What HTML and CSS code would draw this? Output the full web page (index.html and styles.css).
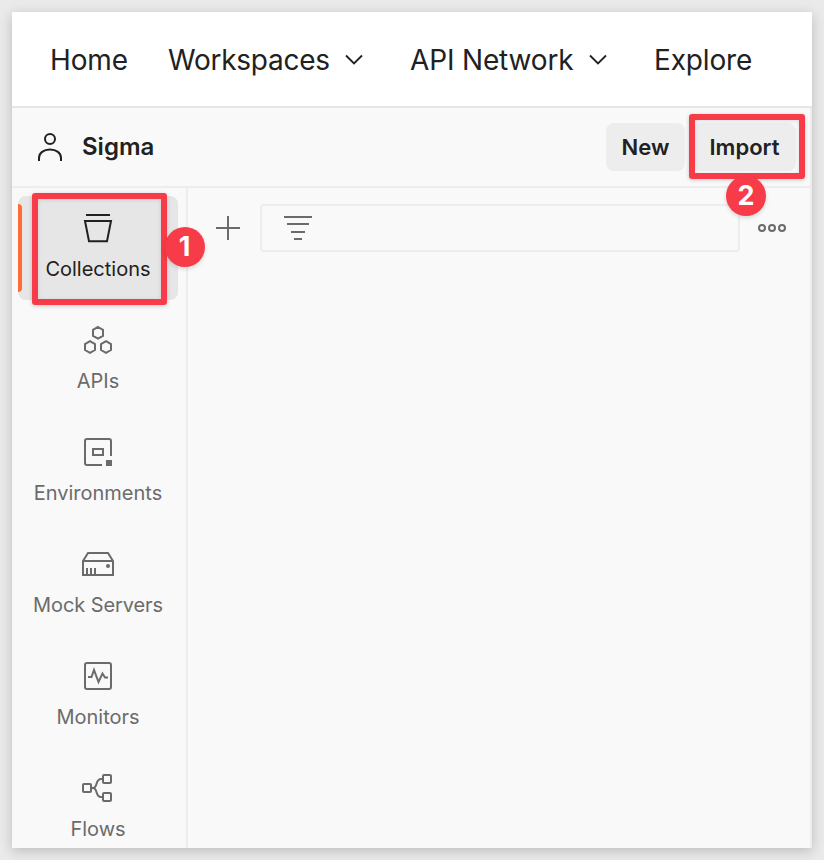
FILE: index.html
```html
<!DOCTYPE html>
<html lang="en">
<head>
<meta charset="utf-8">
<title>Sigma workspace</title>
<link rel="stylesheet" href="styles.css">
</head>
<body>
<div class="window">
  <nav class="topnav">
    <a class="nav-home">Home</a>
    <a class="nav-workspaces">Workspaces</a>
    <svg class="chevron" width="18" height="12" viewBox="0 0 18 12"><path d="M1 1.500l8 8 8-8"/></svg>
    <a class="nav-api">API Network</a>
    <svg class="chevron" width="18" height="12" viewBox="0 0 18 12"><path d="M1 1.500l8 8 8-8"/></svg>
    <a class="nav-explore">Explore</a>
  </nav>
  <div class="panel">
    <header class="workspace">
      <svg class="user" width="26" height="30" viewBox="0 0 26 30"><circle cx="13" cy="7" r="5"/><path d="M2 29v-3c0-5 4.500-8.500 11-8.500S24 21 24 26v3"/></svg>
      <h1 class="workspace-name">Sigma</h1>
      <button class="btn btn-new">New</button>
      <div class="import-wrap">
        <button class="btn btn-import">Import</button>
        <div class="callout callout-import"></div>
        <span class="step step-two">2</span>
      </div>
    </header>
    <div class="body">
      <aside class="sidebar">
        <div class="item active">
          <svg class="icon" viewBox="0 0 32 32"><path d="M4 3h24M3 9h26l-4 20.200H7z"/></svg>
          <span class="label">Collections</span>
          <div class="callout callout-collections"></div>
          <span class="step step-one">1</span>
        </div>
        <div class="item">
          <svg class="icon" viewBox="0 0 32 32"><path d="M16 3l5 2.900v5.900l-5 2.900-5-2.900V5.900zM8 17.200l5 2.900V26l-5 2.900L3 26v-5.900zM24 17.200l5 2.900V26l-5 2.900-5-2.900v-5.900z"/></svg>
          <span class="label">APIs</span>
        </div>
        <div class="item">
          <svg class="icon" viewBox="0 0 32 32"><path d="M20 29H5a2 2 0 0 1-2-2V5a2 2 0 0 1 2-2h22a2 2 0 0 1 2 2v15M11 13h10v6H11z"/><path class="solid" d="M24 24h6v6h-6z"/></svg>
          <span class="label">Environments</span>
        </div>
        <div class="item">
          <svg class="icon" viewBox="0 0 32 32"><path d="M1 13L6 5h20l5 8v14H1zM1 13h30M5 20v7M9 20v7M13 20v7"/><circle class="solid" cx="26" cy="18" r="2"/></svg>
          <span class="label label-mock">Mock Servers</span>
        </div>
        <div class="item">
          <svg class="icon" viewBox="0 0 32 32"><rect x="3" y="3" width="26" height="26" rx="2"/><path d="M6 17h3.500L12 10l4.500 12 4-8.500 2.500 4h3"/></svg>
          <span class="label">Monitors</span>
        </div>
        <div class="item">
          <svg class="icon" viewBox="0 0 32 32"><rect x="1" y="12" width="8" height="8" rx="1"/><rect x="21" y="3" width="8" height="8" rx="1"/><rect x="21" y="21" width="8" height="8" rx="1"/><path d="M9 16h2c5 0 2-9 8-9h2M11 16c5 0 2 9 8 9h2"/></svg>
          <span class="label">Flows</span>
        </div>
      </aside>
      <main class="content">
        <div class="toolbar">
          <svg class="plus" width="24" height="24" viewBox="0 0 24 24"><path d="M12 0v24M0 12h24"/></svg>
          <div class="filter">
            <svg width="28" height="26" viewBox="0 0 28 26"><path d="M0 2h28M3 9h22M7 17h14M10 24h8"/></svg>
          </div>
          <svg class="more" width="28" height="8" viewBox="0 0 28 8"><circle cx="4" cy="4" r="3"/><circle cx="14" cy="4" r="3"/><circle cx="24" cy="4" r="3"/></svg>
        </div>
      </main>
    </div>
  </div>
</div>
</body>
</html>
```
FILE: styles.css
```css
* { box-sizing: border-box; }

body {
  margin: 0;
  height: 860px;
  padding: 12px;
  overflow: hidden;
  background: #eaeaea;
  color: #212121;
  font-family: Inter, "Liberation Sans", sans-serif;
}

svg {
  display: block;
  flex: none;
  fill: none;
  stroke: currentColor;
  stroke-width: 2;
}

.window {
  display: flex;
  flex-direction: column;
  width: 800px;
  height: 836px;
  background: #f9f9f9;
  box-shadow: 0 3px 12px rgba(0, 0, 0, .2);
}

.topnav {
  display: flex;
  align-items: center;
  height: 96px;
  padding: 2px 0 0 38px;
  background: #fff;
  border-bottom: 2px solid #e6e6e6;
  font-size: 28px;
  line-height: 34px;
  letter-spacing: -.15px;
  white-space: nowrap;
}

.nav-home { width: 118px; }
.nav-workspaces { width: 177px; letter-spacing: -.25px; }
.nav-api { width: 179px; margin-left: 47px; }
.nav-explore { margin-left: 47px; }
.chevron { stroke-width: 1.8; }

.panel {
  flex: 1;
  display: flex;
  flex-direction: column;
  min-height: 0;
  border-right: 2px solid #ededed;
}

.workspace {
  display: flex;
  align-items: center;
  height: 80px;
  padding: 0 14px 0 25px;
  border-bottom: 2px solid #ededed;
}

.workspace-name {
  flex: 1;
  margin: 0 0 0 19px;
  font-size: 24px;
  line-height: 30px;
  font-weight: 600;
}

.btn {
  display: block;
  height: 48px;
  padding: 0;
  border: 0;
  border-radius: 8px;
  background: #ededed;
  color: #212121;
  font: 600 22px/48px Inter, "Liberation Sans", sans-serif;
}

.btn-new { width: 79px; margin-right: 8px; }
.btn-import { width: 103px; }
.import-wrap { position: relative; }

.callout {
  position: absolute;
  border: 6px solid #f73b48;
  border-radius: 3px;
  box-shadow: 0 1px 4px rgba(0, 0, 0, .2), inset 0 1px 4px rgba(0, 0, 0, .12);
}

.callout-import { left: -4px; top: -9.500px; width: 116px; height: 65px; }
.callout-collections { left: 14.300px; top: -3px; width: 135.200px; height: 112px; }

.step {
  position: absolute;
  width: 40px;
  height: 40px;
  border-radius: 50%;
  background: #f73b48;
  color: #fff;
  font-size: 27px;
  line-height: 40px;
  font-weight: 700;
  text-align: center;
  box-shadow: 0 2px 4px rgba(0, 0, 0, .14);
}

.step-one { left: 146.500px; top: 31px; }
.step-two { left: 33px; top: 52.500px; }

.body { flex: 1; display: flex; min-height: 0; }

.sidebar {
  display: flex;
  flex-direction: column;
  gap: 8px;
  width: 176px;
  padding: 8px 8px 0 6px;
  border-right: 2px solid #ededed;
}

.item {
  position: relative;
  flex: none;
  display: flex;
  flex-direction: column;
  align-items: center;
  height: 104px;
  padding-top: 16px;
  border-radius: 8px;
  color: #6b6b6b;
}

.item:last-child { height: 92px; }

.active { background: #e6e6e6; color: #212121; }

.active::before {
  content: "";
  position: absolute;
  left: 0;
  top: 8px;
  width: 4px;
  height: 88px;
  border-radius: 0 4px 4px 0;
  background: #ff6c37;
}

.icon { width: 32px; height: 32px; }
.solid { fill: currentColor; stroke: none; }

.label {
  margin-top: 13px;
  font-size: 20px;
  line-height: 24px;
  white-space: nowrap;
}

.label-mock { letter-spacing: -.1px; }

.content { flex: 1; padding: 16px 24px 0 28px; }

.toolbar { display: flex; align-items: center; }

.plus, .filter, .more { color: #6b6b6b; }

.filter {
  display: flex;
  align-items: center;
  width: 480px;
  height: 48px;
  margin: 0 18px 0 20px;
  padding-left: 22px;
  border: 2px solid #ededed;
  border-radius: 4px;
}

.filter svg { margin-top: -1px; }
```
